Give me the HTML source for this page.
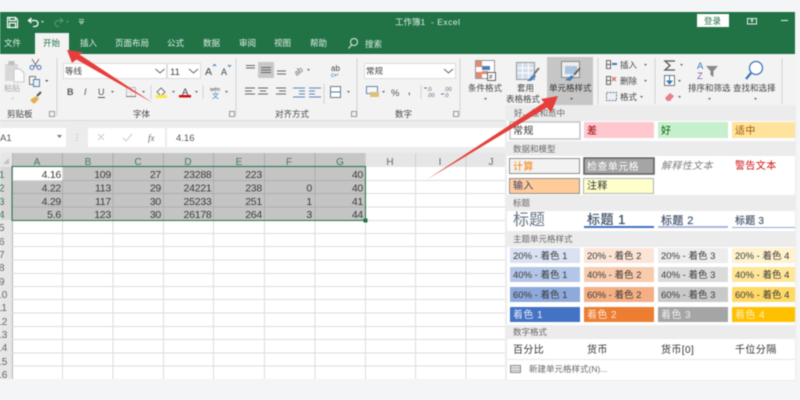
<!DOCTYPE html>
<html lang="zh"><head><meta charset="utf-8"><title>工作簿1 - Excel</title>
<style>
html,body{margin:0;padding:0;width:800px;height:400px;overflow:hidden;background:#f4f5f7}
svg{display:block;filter:blur(.45px)}
text{font-family:"Liberation Sans","Noto Sans CJK SC",sans-serif;fill:#444}
.tab{font-size:8.5px;fill:#dfeee6}
.r{font-size:8.5px;fill:#555}
.n{font-size:10.5px;text-anchor:end;fill:#3a3a3a;letter-spacing:-.25px}
.h{font-size:10px;text-anchor:middle;fill:#666}
.hs{font-size:10px;text-anchor:middle;fill:#3f7a5c}
.b{font-size:8.5px;fill:#666}
.c{font-size:10px;letter-spacing:.4px;fill:#333}
.p{font-size:9.5px;fill:#3a3a3a}
.w{font-size:10px;letter-spacing:.4px;fill:#fff}
.g{stroke:#dcdcdc;stroke-width:1}
.ic{fill:none;stroke:#666;stroke-width:1}
</style></head><body>
<svg width="800" height="400" viewBox="0 0 800 400" xmlns="http://www.w3.org/2000/svg">
<rect width="800" height="400" fill="#f4f5f7"/>
<!-- title bar -->
<rect x="0" y="12" width="795" height="42" fill="#217346"/>
<path d="M7.5 17.500h8l2 2v8h-10zM9.500 17.500v3h6v-3M9.500 27v-4h6v4" fill="none" stroke="#fff" stroke-width="1.200"/>
<path d="M29 20.500h6a3 3 0 0 1 0 6h-2M31.500 18l-3 2.500 3 2.500" fill="none" stroke="#fff" stroke-width="1.300"/>
<path d="M41 21l3 0-1.500 2z" fill="#cfe3d8"/>
<path d="M62 20.500h-4a3 3 0 0 0 0 6h1M60 18l3 2.500-3 2.500" fill="none" stroke="#5d9a7b" stroke-width="1"/>
<path d="M66 21h3l-1.500 2z" fill="#5d9a7b"/>
<path d="M79 19.500h5M79.500 21.500h4l-2 2.500z" fill="none" stroke="#cfe3d8" stroke-width=".8"/>
<text x="395" y="25" font-size="8.500" style="fill:#dfeee6">工作簿1</text>
<text x="431" y="25" font-size="8.500" style="fill:#dfeee6;letter-spacing:.5px">-  Excel</text>
<rect x="697" y="14" width="32" height="13" fill="#fff"/>
<text x="704" y="24" font-size="8.500" style="fill:#217346">登录</text>
<rect x="747.500" y="18.500" width="9" height="5.500" fill="none" stroke="#e6f0ea"/>
<path d="M752 23v-3M750.500 21l1.500-1.500 1.500 1.500" fill="none" stroke="#e6f0ea" stroke-width=".8"/>
<path d="M781 20.500h7" stroke="#e6f0ea" stroke-width="1"/>
<!-- tabs -->
<rect x="35" y="33" width="34" height="22" fill="#f3f3f3"/>
<text class="tab" x="4" y="46">文件</text>
<text class="tab" x="43" y="46" style="fill:#217346">开始</text>
<text class="tab" x="80" y="46">插入</text>
<text class="tab" x="115" y="46">页面布局</text>
<text class="tab" x="167" y="46">公式</text>
<text class="tab" x="203" y="46">数据</text>
<text class="tab" x="239" y="46">审阅</text>
<text class="tab" x="274" y="46">视图</text>
<text class="tab" x="310" y="46">帮助</text>
<circle cx="354" cy="42" r="3.500" fill="none" stroke="#dfeee6"/>
<path d="M351.500 45l-3 3.500" stroke="#dfeee6"/>
<text class="tab" x="365" y="47">搜索</text>
<!-- ribbon -->
<rect x="0" y="54" width="795" height="66" fill="#f3f3f3"/>
<rect x="0" y="120" width="507" height="33" fill="#ececec"/>
<rect x="0" y="120" width="507" height="1" fill="#dadada"/>
<path d="M57 58v58M236 58v58M324 84v20M357 58v58M460 58v58M598 58v46M655 58v46M782 58v46" stroke="#d2d2d2"/>
<!-- clipboard -->
<rect x="5" y="64" width="13" height="17" fill="#d8d8d8"/><rect x="8.500" y="61" width="6" height="4" fill="#bdbdbd"/>
<path d="M14 69h6l4 4v9h-10z" fill="#fbfbfb" stroke="#c8c8c8"/>
<text x="4" y="91" font-size="8" style="fill:#aaa">粘贴</text>
<path d="M11 98h3l-1.500 1.500z" fill="#bbb"/>
<path d="M32 59l5 8M39 59l-5 8" stroke="#777" fill="none"/><circle cx="32" cy="67.500" r="2" fill="none" stroke="#4a78b0"/><circle cx="39" cy="67.500" r="2" fill="none" stroke="#4a78b0"/>
<rect x="29.500" y="76.500" width="6" height="8" fill="#f7f7f7" stroke="#777"/><rect x="33.500" y="79.500" width="6" height="7" fill="#eaf1f8" stroke="#5b7fa8"/>
<path d="M45 80h3.500l-1.750 2z" fill="#555"/>
<path d="M30 100l6-4 3 3-5 5z" fill="#e0b050"/><path d="M37 96l4-4" stroke="#555" stroke-width="2"/>
<text class="r" x="7" y="117" style="fill:#444">剪贴板</text>
<rect x="49.500" y="111.500" width="5" height="5" fill="none" stroke="#999"/>
<!-- font -->
<rect x="63.500" y="63.500" width="103" height="15" fill="#fff" stroke="#dcdcdc"/>
<text class="r" x="65" y="74" font-size="8.500" style="fill:#444">等线</text>
<path d="M155.500 69l4.500 4 4.500-4" fill="none" stroke="#666"/>
<rect x="167.500" y="63.500" width="33" height="15" fill="#fff" stroke="#dcdcdc"/>
<text x="170" y="75" font-size="9.500">11</text>
<path d="M189 69l4.500 4 4.500-4" fill="none" stroke="#666"/>
<text x="205" y="75" font-size="10.500">A</text><path d="M213 66l1.500-1.500 1.500 1.500" fill="none" stroke="#3a78b8"/>
<text x="221" y="75" font-size="9">A</text><path d="M228 65l1.500 1.500 1.500-1.500" fill="none" stroke="#3a78b8"/>
<text x="67" y="95" font-size="9" font-weight="bold" style="fill:#555">B</text>
<text x="84" y="95" font-size="9" font-style="italic" style="fill:#555">I</text>
<text x="98" y="95" font-size="9" style="fill:#555">U</text><path d="M98 97.500h7" stroke="#555"/>
<path d="M111 91h3l-1.500 2z" fill="#666"/>
<rect x="126.500" y="87.500" width="9" height="9" fill="none" stroke="#bbb"/><path d="M126 92h10M131 87v10" stroke="#ddd"/><path d="M126 96.500h10" stroke="#777"/>
<path d="M142 91h3l-1.500 2z" fill="#666"/>
<path d="M151 85v14" stroke="#d2d2d2"/>
<path d="M157 92l4-4 4 4-3.500 3.500h-1z" fill="#f7f7f7" stroke="#777"/><rect x="156" y="95" width="11" height="3" fill="#ffe93a"/>
<path d="M172 91h3l-1.500 2z" fill="#666"/>
<text x="182" y="95" font-size="9.500" style="fill:#444">A</text><rect x="179" y="95" width="12" height="2.500" fill="#d01010"/>
<path d="M195 91h3l-1.500 2z" fill="#666"/>
<path d="M203 85v14" stroke="#d2d2d2"/>
<text x="210" y="91" font-size="5.500">wén</text><text x="212" y="98" font-size="7" style="fill:#3a78b8">文</text>
<path d="M225 91h3l-1.500 2z" fill="#666"/>
<text class="r" x="133" y="117" style="fill:#444">字体</text>
<rect x="229.500" y="111.500" width="5" height="5" fill="none" stroke="#999"/>
<!-- alignment -->
<rect x="258" y="62" width="16" height="16" fill="#c8c8c8"/>
<path d="M246 65.500h9M246 68h9" class="ic" stroke-width=".8"/>
<path d="M261 67.500h10M261 70h10M261 72.500h10" class="ic"/>
<path d="M277 71h9M277 74h9" class="ic"/>
<text x="293" y="74" font-size="8" transform="rotate(-40 298 70)" style="fill:#666">ab</text><path d="M307 69h3l-1.500 2z" fill="#666"/>
<text x="331" y="71" font-size="8">ab</text><text x="331" y="77" font-size="6" style="fill:#3a78b8">c↵</text>
<path d="M245 88h10M245 91h7M245 94h10M258 88h10M260 91h6M258 94h10M276 88h10M279 91h7M276 94h10" class="ic" stroke-width=".9"/>
<path d="M293 88h12M299 91h6M299 94h6M293 97h12M309 88h12M309 91h6M309 94h6M309 97h12" class="ic" style="stroke:#5c86b5"/>
<rect x="330.500" y="86.500" width="10" height="11" fill="#fff" stroke="#777"/><path d="M331 92h9" stroke="#3a78b8"/>
<path d="M347 91h3l-1.500 2z" fill="#666"/>
<text class="r" x="275" y="117" style="fill:#444">对齐方式</text>
<rect x="351.500" y="111.500" width="5" height="5" fill="none" stroke="#999"/>
<!-- number -->
<rect x="364.500" y="63.500" width="91" height="15" fill="#fff" stroke="#dcdcdc"/>
<text x="366" y="74" font-size="8.500" style="fill:#444">常规</text>
<path d="M444 69l4.500 4 4.500-4" fill="none" stroke="#666"/>
<rect x="366.500" y="86.500" width="11" height="7" fill="#f7f7f7" stroke="#5c86b5"/><rect x="370" y="92" width="9" height="5" fill="#d9c27a"/>
<path d="M382 91h3l-1.500 2z" fill="#666"/>
<text x="391" y="96" font-size="9.500" style="fill:#555">%</text>
<text x="408" y="94" font-size="9" font-weight="bold" style="fill:#666">,</text>
<path d="M421 85v14" stroke="#d2d2d2"/>
<text x="427" y="91" font-size="5.500" style="fill:#666">.0</text><text x="427" y="97" font-size="5.500" style="fill:#666">.00</text>
<text x="444" y="91" font-size="5.500" style="fill:#666">.00</text><text x="444" y="97" font-size="5.500" style="fill:#666">.0</text>
<path d="M424 88h3M441 94h3" stroke="#3a78b8"/>
<text class="r" x="395" y="117" style="fill:#444">数字</text>
<rect x="453.500" y="111.500" width="5" height="5" fill="none" stroke="#999"/>
<!-- styles buttons -->
<rect x="547" y="57" width="46" height="48" fill="#c6c6c6"/>
<rect x="475.500" y="60.500" width="19" height="18" fill="#fff" stroke="#999"/>
<rect x="476" y="61" width="6" height="6" fill="#e08a70"/><rect x="482" y="66" width="8" height="4" fill="#4f7fba"/><rect x="482" y="71" width="6" height="3" fill="#e08a70"/><rect x="476" y="72" width="6" height="6" fill="#e08a70"/>
<rect x="487.500" y="72.500" width="8" height="8" fill="#fff" stroke="#666"/>
<text x="489" y="79" font-size="7" style="fill:#333">≠</text>
<rect x="516.500" y="62.500" width="18" height="17" fill="#d5dfec" stroke="#999"/>
<path d="M517 68h17M517 73h17M522.500 63v16M528.500 63v16" stroke="#fff"/>
<path d="M527 81l7-7 2 2-5 5z" fill="#4a7fb8"/><path d="M534 74l5-6" stroke="#777" stroke-width="2"/>
<rect x="561.500" y="61.500" width="18" height="16" fill="#eee" stroke="#888"/><rect x="565" y="66" width="12" height="8" fill="#aac3e0"/>
<path d="M565 80l7-5 2 2-4 4z" fill="#4a7fb8"/><path d="M574 75l6-7" stroke="#666" stroke-width="2"/>
<text class="r" x="468" y="91" style="fill:#444">条件格式</text>
<path d="M484 98h3l-1.500 2z" fill="#666"/>
<text class="r" x="517" y="91" style="fill:#444">套用</text>
<text class="r" x="506" y="102" style="fill:#444">表格格式</text>
<path d="M543 99h3l-1.500 2z" fill="#666"/>
<text class="r" x="549" y="91" style="fill:#333">单元格样式</text>
<path d="M570 98h3l-1.500 2z" fill="#555"/>
<!-- cells -->
<rect x="606.500" y="60.500" width="4" height="4" class="ic"/><rect x="606.500" y="64.500" width="4" height="4" class="ic"/><path d="M612 64h5" stroke="#3a78b8" stroke-width="2"/>
<text class="r" x="620" y="68" style="fill:#444">插入</text><path d="M644 64h3l-1.500 2z" fill="#666"/>
<rect x="606.500" y="76.500" width="4" height="4" class="ic"/><rect x="606.500" y="80.500" width="4" height="4" class="ic"/><path d="M612 77l4 4M616 77l-4 4" stroke="#d85050"/>
<text class="r" x="620" y="84" style="fill:#444">删除</text><path d="M644 80h3l-1.500 2z" fill="#666"/>
<rect x="606.500" y="92.500" width="10" height="8" fill="#eaf1f8" stroke="#777" stroke-dasharray="2 1"/>
<text class="r" x="620" y="100" style="fill:#444">格式</text><path d="M640 96h3l-1.500 2z" fill="#666"/>
<path d="M675 61h-10l5 4.500-5 4.500h10" fill="none" stroke="#555" stroke-width="1.300"/><path d="M680 64h3l-1.500 2z" fill="#666"/>
<rect x="664.500" y="75.500" width="10" height="10" fill="#fff" stroke="#777"/><path d="M669.500 76v7M667 81l2.500 3 2.500-3z" fill="#3a78b8" stroke="#3a78b8"/><path d="M678 80h3l-1.500 2z" fill="#666"/>
<path d="M665 98l5-5 4 3-4 5h-3z" fill="#e87e8e"/><path d="M678 96h3l-1.500 2z" fill="#666"/>
<text x="697" y="69" font-size="9.500" style="fill:#3a78b8">A</text><text x="697" y="79" font-size="9.500" style="fill:#8d5ba8">Z</text>
<path d="M706 66h12l-4.500 5v6l-3-2v-4z" fill="#888"/>
<circle cx="756" cy="68" r="6.500" fill="#fff" stroke="#3a78b8" stroke-width="1.300"/><path d="M751 73l-5 6" stroke="#3a78b8" stroke-width="2.200"/>
<text class="r" x="688" y="91" style="fill:#444">排序和筛选</text>
<text class="r" x="733" y="91" style="fill:#444">查找和选择</text>
<path d="M708 98h3l-1.500 2zM754 98h3l-1.500 2z" fill="#666"/>
<!-- formula bar -->
<rect x="0" y="128" width="66" height="19" fill="#fff"/>
<text x="0" y="141" font-size="9.500" style="fill:#555">A1</text>
<path d="M57 135h5l-2.500 3z" fill="#777"/>
<path d="M77 134v1M77 137v1M77 140v1" stroke="#aaa"/>
<rect x="88" y="128" width="77" height="19" fill="#fff"/>
<path d="M98 134l6 6M104 134l-6 6" stroke="#ccc"/>
<path d="M123 138l3 3 6-7" fill="none" stroke="#ccc"/>
<text x="148" y="141" font-size="9" font-style="italic" style="font-family:'Liberation Serif',serif;fill:#666">fx</text>
<rect x="167" y="128" width="340" height="19" fill="#fff"/>
<text x="176" y="141" font-size="9.500" style="fill:#555">4.16</text>
<!-- sheet -->
<rect x="0" y="153" width="507" height="226" fill="#fff"/>
<rect x="0" y="153" width="507" height="14" fill="#e6e6e6"/>
<rect x="0" y="153" width="12" height="226" fill="#e6e6e6"/>
<rect x="12" y="153" width="353" height="14" fill="#c6c6c6"/>
<rect x="0" y="167" width="12" height="53" fill="#d6d6d6"/>
<rect x="12" y="167" width="353" height="53" fill="#c4c4c4"/>
<rect x="12" y="167" width="50" height="13" fill="#fff"/>
<path d="M3 164l6-6v6z" fill="#c2c2c2"/>
<path d="M12.500 153v226" stroke="#b4b4b4"/>
<path class="g" d="M62.500 167v212M113 167v212M163.500 167v212M213.500 167v212M264.500 167v212M315 167v212M365.500 167v212M415.500 167v212M466 167v212"/>
<path d="M62.500 153v14M113 153v14M163.500 153v14M213.500 153v14M264.500 153v14M315 153v14" stroke="#adadad"/>
<path d="M365.500 153v14M415.500 153v14M466 153v14" stroke="#cfcfcf"/>
<path class="g" d="M12 180.500h495M12 193.500h495M12 207h495M12 220.500h495M12 233.500h495M12 246.500h495M12 260h495M12 273.500h495M12 286.500h495M12 299.500h495M12 313h495M12 326.500h495M12 339.500h495M12 353h495M12 366h495"/>
<path d="M62 180.500H365M12 193.500H365M12 207H365M62.500 180V220M113 167V220M163.500 167V220M213.500 167V220M264.500 167V220M315 167V220" stroke="#adadad" stroke-width="1" fill="none"/>
<rect x="12" y="166.500" width="353.500" height="54" fill="none" stroke="#217346" stroke-width="1"/>
<rect x="363.500" y="218.500" width="4" height="4" fill="#217346"/>
<text class="hs" x="37" y="165">A</text><text class="hs" x="88" y="165">B</text><text class="hs" x="138" y="165">C</text><text class="hs" x="188" y="165">D</text><text class="hs" x="239" y="165">E</text><text class="hs" x="289" y="165">F</text><text class="hs" x="340" y="165">G</text>
<text class="h" x="390" y="165">H</text><text class="h" x="440" y="165">I</text><text class="h" x="491" y="165">J</text>
<text class="hs" x="1.800" y="178">1</text><text class="hs" x="1.800" y="191.500">2</text><text class="hs" x="1.800" y="205">3</text><text class="hs" x="1.800" y="218">4</text>
<text class="h" x="1.800" y="231">5</text><text class="h" x="1.800" y="245">6</text><text class="h" x="1.800" y="258">7</text><text class="h" x="1.800" y="271">8</text><text class="h" x="1.800" y="285">9</text><text class="h" x="1.800" y="298">10</text><text class="h" x="1.800" y="311">11</text><text class="h" x="1.800" y="325">12</text><text class="h" x="1.800" y="338">13</text><text class="h" x="1.800" y="351">14</text><text class="h" x="1.800" y="365">15</text><text class="h" x="1.800" y="378">16</text>
<text class="n" x="61" y="178">4.16</text><text class="n" x="111" y="178">109</text><text class="n" x="161" y="178">27</text><text class="n" x="211.500" y="178">23288</text><text class="n" x="262" y="178">223</text><text class="n" x="363" y="178">40</text>
<text class="n" x="61" y="191.500">4.22</text><text class="n" x="111" y="191.500">113</text><text class="n" x="161" y="191.500">29</text><text class="n" x="211.500" y="191.500">24221</text><text class="n" x="262" y="191.500">238</text><text class="n" x="312" y="191.500">0</text><text class="n" x="363" y="191.500">40</text>
<text class="n" x="61" y="205">4.29</text><text class="n" x="111" y="205">117</text><text class="n" x="161" y="205">30</text><text class="n" x="211.500" y="205">25233</text><text class="n" x="262" y="205">251</text><text class="n" x="312" y="205">1</text><text class="n" x="363" y="205">41</text>
<text class="n" x="61" y="218">5.6</text><text class="n" x="111" y="218">123</text><text class="n" x="161" y="218">30</text><text class="n" x="211.500" y="218">26178</text><text class="n" x="262" y="218">264</text><text class="n" x="312" y="218">3</text><text class="n" x="363" y="218">44</text>
<!-- style panel -->
<rect x="505" y="105" width="291" height="276" fill="#ecedee"/>
<rect x="507" y="105" width="288" height="275" fill="#fff"/>
<rect x="507" y="105" width="288" height="16" fill="#ececec"/>
<rect x="507" y="141" width="288" height="15" fill="#ececec"/>
<rect x="507" y="195" width="288" height="16" fill="#ececec"/>
<rect x="507" y="231" width="288" height="16" fill="#ececec"/>
<rect x="507" y="325" width="288" height="14" fill="#ececec"/>
<path d="M507 359.500h288" stroke="#e6e6e6"/>
<text class="b" x="514" y="116">好、差和适中</text>
<text class="b" x="513" y="152">数据和模型</text>
<text class="b" x="513" y="206">标题</text>
<text class="b" x="513" y="242">主题单元格样式</text>
<text class="b" x="513" y="335">数字格式</text>
<rect x="510" y="122" width="70" height="17" fill="#fff" stroke="#c4c4c4" stroke-width="1.500"/>
<text class="c" x="513" y="134">常规</text>
<rect x="584" y="122" width="70" height="16" fill="#ffc7ce"/><text class="c" x="587" y="134" style="fill:#9c0006">差</text>
<rect x="658" y="122" width="70" height="16" fill="#c6efce"/><text class="c" x="661" y="134" style="fill:#006100">好</text>
<rect x="732" y="122" width="63" height="16" fill="#ffe39c"/><text class="c" x="735" y="134" style="fill:#9c5700">适中</text>
<rect x="509.500" y="158.500" width="70" height="15" fill="#f2f2f2" stroke="#8f8f8f"/><text class="c" x="513" y="170" style="fill:#fa7d00">计算</text>
<rect x="584" y="158" width="70" height="16" fill="#a5a5a5" stroke="#5f5f5f" stroke-width="1.500"/><text class="w" x="587" y="170">检查单元格</text>
<text class="c" x="661" y="169" font-style="italic" style="fill:#7f7f7f">解释性文本</text>
<text class="c" x="735" y="169" style="fill:#d01010">警告文本</text>
<rect x="509.500" y="178.500" width="70" height="15" fill="#ffcc99" stroke="#8f8f8f"/><text class="c" x="513" y="189" style="fill:#3f3f76">输入</text>
<rect x="583.500" y="178.500" width="70" height="15" fill="#ffffcc" stroke="#b2b2b2"/><text class="c" x="587" y="189">注释</text>
<text x="513" y="225" font-size="16" style="fill:#6a7688">标题</text>
<text x="587" y="224" font-size="13" style="fill:#44546a;stroke:#44546a;stroke-width:.25;letter-spacing:.5px">标题 1</text><rect x="584" y="226" width="70" height="2" fill="#4472c4"/>
<text x="661" y="224" font-size="11" style="fill:#44546a;stroke:#44546a;stroke-width:.2;letter-spacing:.4px">标题 2</text><rect x="658" y="226" width="70" height="2" fill="#a9b8db"/>
<text x="735" y="224" font-size="10" style="fill:#44546a;stroke:#44546a;stroke-width:.15;letter-spacing:.2px">标题 3</text><rect x="732" y="227" width="63" height="1" fill="#8ea9db"/>
<rect x="510" y="248" width="70" height="15" fill="#d9e1f2"/><rect x="584" y="248" width="70" height="15" fill="#fce4d6"/><rect x="658" y="248" width="70" height="15" fill="#ededed"/><rect x="732" y="248" width="63" height="15" fill="#fff2cc"/>
<rect x="510" y="267" width="70" height="15" fill="#b4c6e7"/><rect x="584" y="267" width="70" height="15" fill="#f8cbad"/><rect x="658" y="267" width="70" height="15" fill="#dbdbdb"/><rect x="732" y="267" width="63" height="15" fill="#ffe699"/>
<rect x="510" y="287" width="70" height="15" fill="#8ea9db"/><rect x="584" y="287" width="70" height="15" fill="#f4b084"/><rect x="658" y="287" width="70" height="15" fill="#c9c9c9"/><rect x="732" y="287" width="63" height="15" fill="#ffd966"/>
<rect x="510" y="307" width="70" height="15" fill="#4472c4"/><rect x="584" y="307" width="70" height="15" fill="#ed7d31"/><rect x="658" y="307" width="70" height="15" fill="#a5a5a5"/><rect x="732" y="307" width="63" height="15" fill="#ffc000"/>
<text class="p" x="513" y="259">20% - 着色 1</text><text class="p" x="587" y="259">20% - 着色 2</text><text class="p" x="661" y="259">20% - 着色 3</text><text class="p" x="735" y="259">20% - 着色 4</text>
<text class="p" x="513" y="278">40% - 着色 1</text><text class="p" x="587" y="278">40% - 着色 2</text><text class="p" x="661" y="278">40% - 着色 3</text><text class="p" x="735" y="278">40% - 着色 4</text>
<text class="p" x="513" y="298">60% - 着色 1</text><text class="p" x="587" y="298">60% - 着色 2</text><text class="p" x="661" y="298">60% - 着色 3</text><text class="p" x="735" y="298">60% - 着色 4</text>
<text class="w" x="513" y="318" style="fill:#e6ecf8">着色 1</text><text class="w" x="587" y="318" style="fill:#fde8da">着色 2</text><text class="w" x="661" y="318" style="fill:#efefef">着色 3</text><text class="w" x="735" y="318" style="fill:#fff0c0">着色 4</text>
<text class="c" x="513" y="353">百分比</text><text class="c" x="587" y="353">货币</text><text class="c" x="661" y="353">货币[0]</text><text class="c" x="735" y="353">千位分隔</text>
<rect x="510.500" y="365.500" width="10" height="7" fill="#eee" stroke="#8a8a8a"/><path d="M511 368h9M511 370.500h9" stroke="#aaa"/>
<text class="b" x="529" y="372">新建单元格样式(N)...</text>
<!-- red arrows -->
<path d="M67 50L83 52 79.500 54.500 153 103 76.500 59.500 72 63z" fill="#e63e3a"/>
<path d="M427 179.500L544 102.500 541 99 558 96 551 113 547 107.500z" fill="#e63e3a"/>
</svg>
</body></html>
